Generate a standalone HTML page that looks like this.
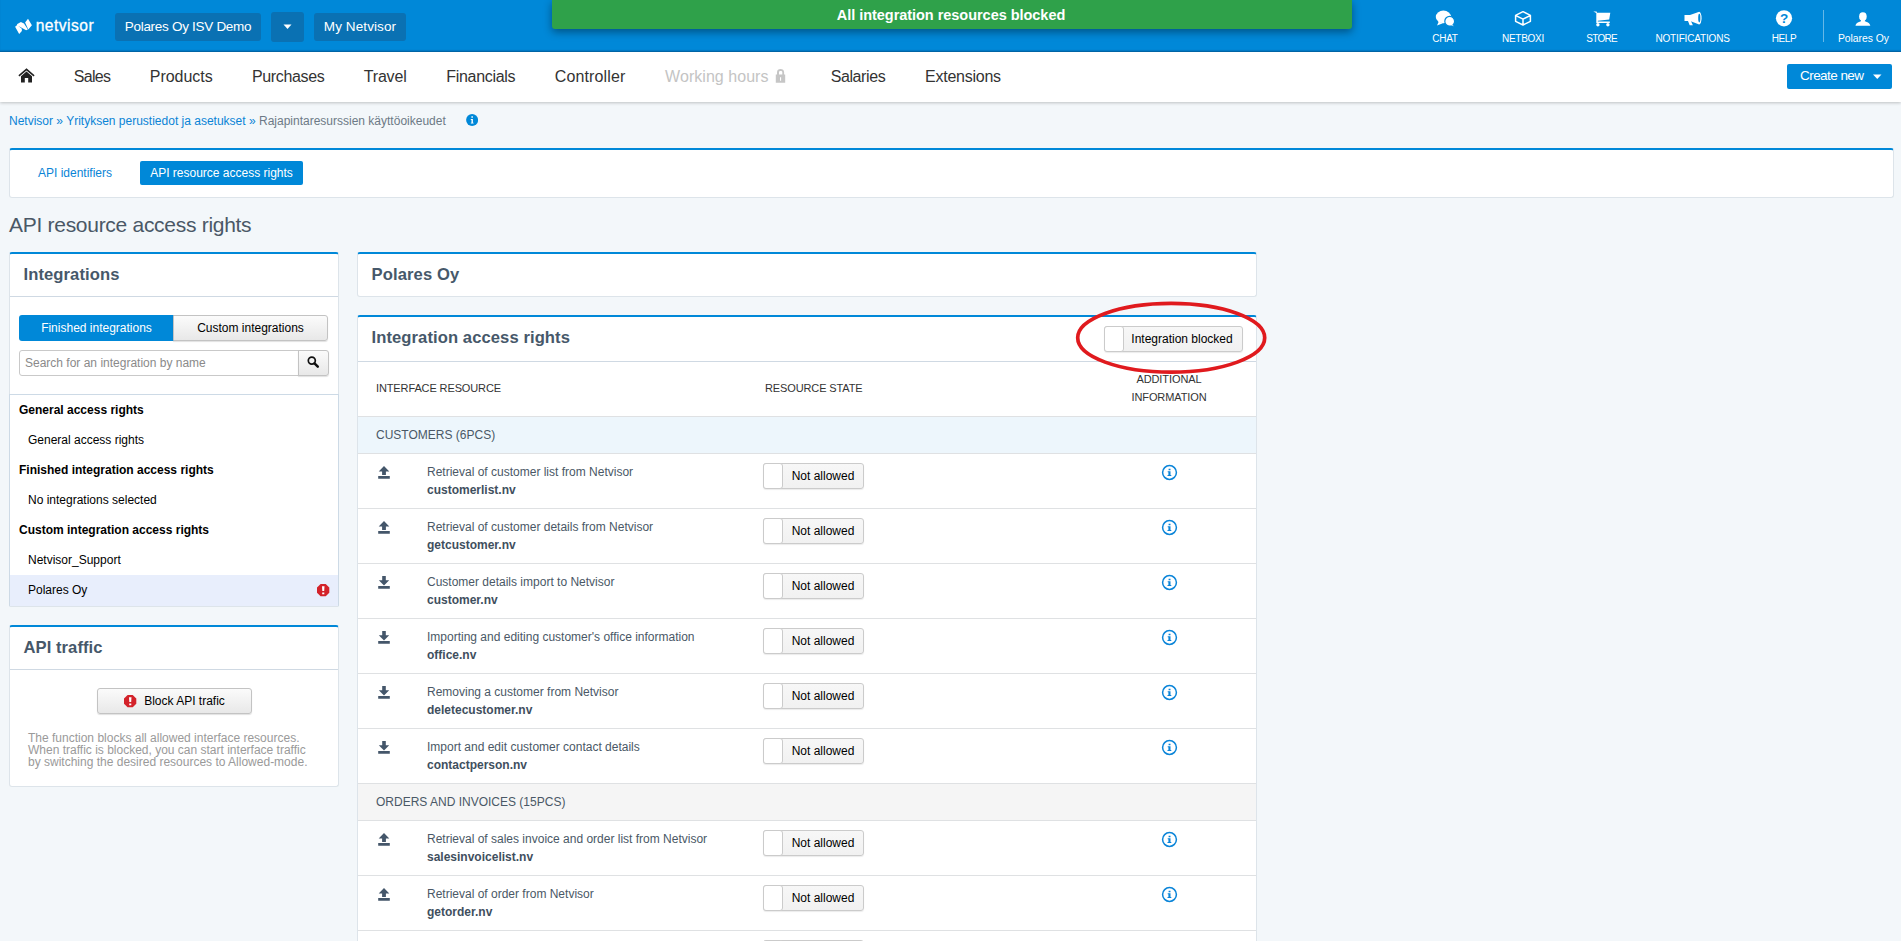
<!DOCTYPE html>
<html lang="en">
<head>
<meta charset="utf-8">
<title>Netvisor - API resource access rights</title>
<style>
*{box-sizing:border-box;margin:0;padding:0}
html,body{width:1901px;height:941px;overflow:hidden}
body{background:#f3f7fa;font-family:"Liberation Sans",Arial,sans-serif;font-size:12px;color:#333;position:relative}
.abs{position:absolute}
i{font-style:normal}
/* top bar */
#top{position:absolute;left:0;top:0;width:1901px;height:52px;background:#0088d8;box-shadow:inset 0 -2px 2px -1px rgba(0,50,100,.5)}
.tbtn{position:absolute;background:#0a71b3;border-radius:3px;color:#fff;font-size:13.5px;text-align:center;white-space:nowrap}
.ticon{position:absolute;top:0;height:51px;color:#fff;text-align:center;font-size:9.7px;white-space:nowrap;width:100px;margin-left:-50px}
.ticon span{position:absolute;left:0;right:0;top:31.5px;line-height:13px}
.ticon svg{position:absolute;top:9.5px;left:50%;margin-left:-10px}
#toast{position:absolute;left:552px;top:0;width:800px;height:29px;background:#2fa14a;border-radius:0 0 3px 3px;box-shadow:0 3px 9px rgba(0,0,0,.4);color:#fff;font-weight:bold;font-size:14.5px;line-height:31px;text-align:center;padding-right:2px}
/* nav */
#nav{position:absolute;left:0;top:52px;width:1901px;height:50px;background:#fff;box-shadow:0 1px 3px rgba(0,0,0,.22)}
#nav a{position:absolute;top:0;line-height:50px;font-size:15.4px;color:#333;white-space:nowrap;text-decoration:none}
#nav a.dis{color:#c4c4c4}
#create{position:absolute;left:1787px;top:12px;width:105px;height:25px;background:#0088d8;border-radius:2px;color:#fff;font-size:13.5px;line-height:24px;padding-left:13px}
/* content */
a.l{color:#0a84d6;text-decoration:none}
.panel{position:absolute;background:#fff;border:1px solid #dde4ea;border-top:2px solid #0088d8;border-radius:3px}
.ph{position:absolute;left:0;right:0;top:0;height:43px;border-bottom:1px solid #cfd9e3;font-weight:bold;font-size:17px;color:#46586a;line-height:42px;padding-left:13.500px;white-space:nowrap}
.btn{position:absolute;border:1px solid #c3c3c3;border-radius:3px;background:linear-gradient(#fbfbfb,#e8e8e8);color:#000;font-size:12px;text-align:center;white-space:nowrap;box-shadow:0 1px 1px rgba(0,0,0,.12)}
.li{position:absolute;left:0;width:328px;height:30px;line-height:30px;color:#000;white-space:nowrap}
.li.b{font-weight:bold;padding-left:9px}
.li.s{padding-left:18px}
.row{position:absolute;left:0;width:898px;height:55px;border-top:1px solid #dfe1e3;color:#4a5866}
.row .io{position:absolute;left:19.500px;top:12px}
.row .t1{position:absolute;left:69px;top:10px;line-height:16px;white-space:nowrap}
.row .t2{position:absolute;left:69px;top:28px;line-height:16px;font-weight:bold;white-space:nowrap;color:#3f4f5e}
.row .inf{position:absolute;left:802.800px;top:9.900px}
.sec{position:absolute;left:0;width:898px;height:37px;border-top:1px solid #dfe1e3;line-height:36px;padding-left:18px;color:#4a5866;white-space:nowrap}
.tg{position:absolute;height:26px;border:1px solid #cbcbcb;border-radius:3px;background:linear-gradient(#f7f7f7,#f1f1f1);color:#000;box-shadow:0 1px 1px rgba(0,0,0,.08)}
.tg i{position:absolute;left:-1px;top:-1px;bottom:-1px;background:#fff;border:1px solid #cbcbcb;border-radius:3px}
.tg span{position:absolute;right:1px;top:0;line-height:24px;text-align:center;white-space:nowrap}
.th{position:absolute;font-size:11px;color:#333;white-space:nowrap;line-height:18px}
</style>
</head>
<body>
<div id="top">
  <svg class="abs" style="left:14px;top:18px" width="19" height="17" viewBox="0 0 19 17"><path d="M1.100 8.800L3.200 7L7.800 10.700L7.900 13L5.150 16.100z M2.900 6.300L6.900 4L10 5.400L13.900 11.500L12.100 12.200L3.600 7.400z M14 .7L17.900 7.300L14.300 11.600L11.100 4.400z" fill="#fff"/></svg>
  <div class="abs" id="logo" style="left:35.700px;top:13.500px;color:#fff;font-size:15.6px;letter-spacing:0.486px;-webkit-text-stroke:.3px #fff;line-height:24px;white-space:nowrap">netvisor</div>
  <div class="tbtn" style="left:115px;top:13px;width:146px;height:28px;line-height:27px;font-size:13.5px;letter-spacing:-0.292px">Polares Oy ISV Demo</div>
  <div class="tbtn" style="left:271px;top:12px;width:33px;height:30px"><svg width="33" height="30"><path d="M12.5 12.5h8l-4 4.5z" fill="#fff"/></svg></div>
  <div class="tbtn" style="left:314px;top:13px;width:92px;height:28px;line-height:27px;font-size:13.5px;letter-spacing:0.094px">My Netvisor</div>
  <div id="toast" style="font-size:14.5px;letter-spacing:-0.035px">All integration resources blocked</div>
  <div class="ticon" style="left:1445px"><svg width="20" height="18" viewBox="0 0 20 18"><path d="M3.800 11.500L2 15.500L7.900 13.200z" fill="#fff"/><ellipse cx="8.400" cy="6.900" rx="7.600" ry="6.300" fill="#fff"/><path d="M16.500 13.500L19.200 16.200L14 15.600z" fill="#fff" stroke="#0088d8" stroke-width=".8"/><circle cx="14.700" cy="11.200" r="4.900" fill="#fff" stroke="#0088d8" stroke-width="1.200"/><path d="M16.200 13.500L18.600 15.800L14.500 15z" fill="#fff"/></svg><span style="font-size:10px;letter-spacing:-0.296px">CHAT</span></div>
  <div class="ticon" style="left:1523px"><svg width="20" height="18" viewBox="0 0 20 18"><path d="M10 1.700L17.400 5.400V11.300L10 15L2.600 11.300V5.400z M2.900 5.600L10 9.200L17.100 5.600 M10 9.200V14.800" fill="none" stroke="#fff" stroke-width="1.500" stroke-linejoin="round"/></svg><span style="font-size:10px;letter-spacing:-0.272px">NETBOXI</span></div>
  <div class="ticon" style="left:1601.600px"><svg width="20" height="18" viewBox="0 0 20 18"><path d="M1.300 1.500H4.600L5 2.700H18.300L17.200 9.600L5.800 10.800V11.400H17.800V12.900H4.300V3z" fill="#fff"/><circle cx="5.900" cy="14.800" r="1.700" fill="#fff"/><circle cx="15.900" cy="14.800" r="1.700" fill="#fff"/></svg><span style="font-size:10px;letter-spacing:-0.696px">STORE</span></div>
  <div class="ticon" style="left:1692.600px"><svg width="20" height="18" viewBox="0 0 20 18"><path d="M1.500 5H7L15.600 2.100V14.300L7 11H1.500z" fill="#fff"/><path d="M4.800 10.500H7.700L9.900 15.300H6.700z" fill="#fff"/><ellipse cx="16.100" cy="8.100" rx="2.500" ry="6.300" fill="#fff"/><ellipse cx="16.300" cy="8.100" rx="1.100" ry="4.300" fill="#0088d8"/></svg><span style="font-size:10px;letter-spacing:-0.168px">NOTIFICATIONS</span></div>
  <div class="ticon" style="left:1784px"><svg width="20" height="18" viewBox="0 0 20 18"><circle cx="10" cy="8.300" r="8.100" fill="#fff"/><text x="10" y="13" font-family="Liberation Sans, sans-serif" font-weight="bold" font-size="13.500" fill="#0088d8" text-anchor="middle">?</text></svg><span style="font-size:10px;letter-spacing:-0.431px">HELP</span></div>
  <div class="abs" style="left:1823px;top:10px;width:1px;height:32px;background:rgba(255,255,255,.4)"></div>
  <div class="ticon" style="left:1863.400px"><svg width="20" height="18" viewBox="0 0 20 18"><ellipse cx="9.900" cy="6.600" rx="3.800" ry="4.400" fill="#fff"/><path d="M2.500 15.700C3 12.800 5.500 12.300 8 11.300V9.500H11.800V11.300C14.300 12.300 16.800 12.800 17.300 15.700z" fill="#fff"/></svg><span style="font-size:10.4px;letter-spacing:-0.041px">Polares Oy</span></div>
</div>
<div id="nav">
  <svg class="abs" style="left:18px;top:16px" width="17" height="15" viewBox="0 0 17 15"><path d="M8.500 0.300L16.600 7.300L15.600 8.400L8.500 2.400L1.400 8.400L0.400 7.300z" fill="#222"/><path d="M8.500 3.600L14 8.300V14.500H10.200V10H6.800V14.500H3V8.300z" fill="#222"/></svg>
  <a class="" style="left:73.7px;font-size:16px;letter-spacing:-0.666px">Sales</a>
  <a class="" style="left:149.8px;font-size:16px;letter-spacing:-0.043px">Products</a>
  <a class="" style="left:252.0px;font-size:16px;letter-spacing:-0.355px">Purchases</a>
  <a class="" style="left:363.8px;font-size:16px;letter-spacing:-0.193px">Travel</a>
  <a class="" style="left:446.3px;font-size:16px;letter-spacing:-0.303px">Financials</a>
  <a class="" style="left:554.7px;font-size:16px;letter-spacing:0.134px">Controller</a>
  <a class="dis" style="left:665.1px;font-size:16px;letter-spacing:0.042px">Working hours</a>
  <a class="" style="left:830.7px;font-size:16px;letter-spacing:-0.402px">Salaries</a>
  <a class="" style="left:925.0px;font-size:16px;letter-spacing:-0.247px">Extensions</a>
  <svg class="abs" style="left:775px;top:17px" width="11" height="14" viewBox="0 0 11 14"><path d="M.8 5.600H2V3.200C2 1.200 3.500 0 5.550 0S9.100 1.200 9.100 3.200V5.600H10.200V13.800H.8z M4 5.600H7.300V3.300C7.300 2.400 6.600 1.900 5.650 1.900S4 2.400 4 3.300z M5 8.300H6.100V11.700H5z" fill="#c6c6c6" fill-rule="evenodd"/></svg>
  <div id="create" style="font-size:13.5px;letter-spacing:-0.555px">Create new<svg class="abs" style="left:86px;top:10px" width="9" height="6"><path d="M0 .5h8.500L4.250 5z" fill="#fff"/></svg></div>
</div>
<div class="abs" id="crumb" style="left:9px;top:114px;line-height:14px;font-size:12px;color:#6d7a86;white-space:nowrap"><a class="l">Netvisor</a> <a class="l">»</a> <a class="l">Yrityksen perustiedot ja asetukset</a> <a class="l">»</a> Rajapintaresurssien käyttöoikeudet</div>
<svg class="abs" style="left:466px;top:114px" width="12" height="12" viewBox="0 0 12 12"><circle cx="6.100" cy="6" r="6" fill="#0088d8"/><path d="M5.400 2.300h1.500v1.500H5.400z M4.800 5H6.900V8.700h.7v.9H4.800v-.9h.7V5.900h-.7z" fill="#fff"/></svg>

<div class="panel" id="tabs" style="left:9px;top:148px;width:1885px;height:50px">
  <a class="l abs" style="left:28px;top:16px;line-height:14px">API identifiers</a>
  <div class="abs" style="left:130px;top:11px;width:163px;height:24px;background:#0088d8;border-radius:2px;color:#fff;line-height:24px;text-align:center">API resource access rights</div>
</div>

<div class="abs" id="title" style="left:9px;top:212px;font-size:21px;letter-spacing:-0.287px;line-height:26px;color:#4a5866;white-space:nowrap">API resource access rights</div>
<div class="panel" id="lp" style="left:9px;top:252px;width:330px;height:355px">
<div class="ph" style="font-size:16.6px;letter-spacing:0.086px">Integrations</div>
<div class="abs" style="left:9px;top:61px;width:155px;height:26px;background:#0088d8;border-radius:3px 0 0 3px;color:#fff;line-height:26px;text-align:center">Finished integrations</div>
<div class="btn" style="left:163px;top:61px;width:155px;height:26px;line-height:24px;border-radius:0 3px 3px 0">Custom integrations</div>
<div class="abs" style="left:9px;top:96px;width:281px;height:26px;border:1px solid #c9c9c9;border-radius:3px 0 0 3px;background:#fff;color:#8a8a8a;line-height:24px;padding-left:5px;white-space:nowrap">Search for an integration by name</div>
<div class="btn" style="left:288px;top:96px;width:31px;height:26px;border-radius:0 3px 3px 0"><svg width="29" height="24" viewBox="0 0 29 24"><circle cx="12.800" cy="9.600" r="3.500" fill="none" stroke="#111" stroke-width="1.700"/><path d="M15.500 12.300L18.800 15.600" stroke="#111" stroke-width="2.500" stroke-linecap="round"/></svg></div>
<div class="abs" style="left:-1px;right:-1px;top:140px;bottom:-1px;border:1px solid #cddae6;border-bottom-color:#dde4ea;border-radius:0 0 2px 2px"></div>
<div class="li b" style="top:141px">General access rights</div>
<div class="li s" style="top:171px">General access rights</div>
<div class="li b" style="top:201px">Finished integration access rights</div>
<div class="li s" style="top:231px">No integrations selected</div>
<div class="li b" style="top:261px">Custom integration access rights</div>
<div class="li s" style="top:291px">Netvisor_Support</div>
<div class="li s" style="top:321px;background:#e8eefc;height:31px">Polares Oy</div>
<svg class="abs" style="left:306.600px;top:329.800px" width="13" height="13" viewBox="0 0 13 13"><path d="M3.600 0H8.700L12.300 3.600V8.700L8.700 12.300H3.600L0 8.700V3.600z" fill="#d3222a"/><path d="M5 2.200H7.500L7.200 7.100H5.300z M5.200 8.400H7.300V10.300H5.200z" fill="#fff"/></svg>
</div>
<div class="panel" id="tp" style="left:9px;top:625px;width:330px;height:162px">
  <div class="ph" style="font-size:16.6px;letter-spacing:0.057px">API traffic</div>
  <div class="btn" style="left:87px;top:61px;width:155px;height:26px;line-height:24px"><svg style="vertical-align:-2.500px;margin-right:7px" width="13" height="13" viewBox="0 0 13 13"><path d="M3.600 0H8.700L12.300 3.600V8.700L8.700 12.300H3.600L0 8.700V3.600z" fill="#d3222a"/><path d="M5 2.200H7.500L7.200 7.100H5.300z M5.200 8.400H7.300V10.300H5.200z" fill="#fff"/></svg>Block API trafic</div>
  <div class="abs" style="left:18px;top:105px;color:#9a9a9a;line-height:12px;white-space:nowrap">The function blocks all allowed interface resources.<br>When traffic is blocked, you can start interface traffic<br>by switching the desired resources to Allowed-mode.</div>
</div>
<div class="panel" id="rp1" style="left:357px;top:252px;width:900px;height:45px">
  <div class="ph" style="border-bottom:0;font-size:16.6px;letter-spacing:0.108px">Polares Oy</div>
</div>
<div class="panel" id="rp2" style="left:357px;top:315px;width:900px;height:640px;border-bottom:0;border-radius:3px 3px 0 0">
<div class="ph" style="height:45px;font-size:16.6px;letter-spacing:0.083px">Integration access rights</div>
<div class="tg" style="left:746px;top:9px;width:139px"><i style="width:20px"></i><span style="left:20px;right:3px">Integration blocked</span></div>
<div class="th" style="left:18px;top:62px;font-size:11px;letter-spacing:-0.119px">INTERFACE RESOURCE</div>
<div class="th" style="left:407px;top:62px;font-size:11px;letter-spacing:-0.116px">RESOURCE STATE</div>
<div class="th" style="left:711px;top:53px;width:200px;text-align:center"><span style="font-size:11px;letter-spacing:-0.082px">ADDITIONAL</span><br><span style="font-size:11px;letter-spacing:-0.108px">INFORMATION</span></div>
<div class="sec" style="top:99px;background:#edf6fc">CUSTOMERS (6PCS)</div>
<div class="row" style="top:136px"><svg class="io" width="12" height="13" viewBox="0 0 12 13"><path d="M6 0L11.300 5.500H7.900V8.900H4.100V5.500H.700z M.2 10.100h11.600v2.700H.2z" fill="#44566a"/></svg><div class="t1">Retrieval of customer list from Netvisor</div><div class="t2">customerlist.nv</div><div class="tg" style="left:405px;top:9px;width:101px"><i style="width:20px"></i><span style="left:20px;right:1px">Not allowed</span></div><svg class="inf" width="17" height="17" viewBox="0 0 17 17"><circle cx="8.500" cy="8.500" r="6.900" fill="#fff" stroke="#0a84d8" stroke-width="1.500"/><path d="M7.600 4.700h1.900v1.500H7.600z M6.700 7.300H9.500V11.100h.8v.9H6.500v-.9h.9V8.200h-.7z" fill="#0a84d8"/></svg></div>
<div class="row" style="top:191px"><svg class="io" width="12" height="13" viewBox="0 0 12 13"><path d="M6 0L11.300 5.500H7.900V8.900H4.100V5.500H.700z M.2 10.100h11.600v2.700H.2z" fill="#44566a"/></svg><div class="t1">Retrieval of customer details from Netvisor</div><div class="t2">getcustomer.nv</div><div class="tg" style="left:405px;top:9px;width:101px"><i style="width:20px"></i><span style="left:20px;right:1px">Not allowed</span></div><svg class="inf" width="17" height="17" viewBox="0 0 17 17"><circle cx="8.500" cy="8.500" r="6.900" fill="#fff" stroke="#0a84d8" stroke-width="1.500"/><path d="M7.600 4.700h1.900v1.500H7.600z M6.700 7.300H9.500V11.100h.8v.9H6.500v-.9h.9V8.200h-.7z" fill="#0a84d8"/></svg></div>
<div class="row" style="top:246px"><svg class="io" width="12" height="13" viewBox="0 0 12 13"><path d="M4.200 0H7.800V4.200H11.200L6 9.400L.800 4.200H4.200z M.2 10.100h11.600v2.700H.2z" fill="#44566a"/></svg><div class="t1">Customer details import to Netvisor</div><div class="t2">customer.nv</div><div class="tg" style="left:405px;top:9px;width:101px"><i style="width:20px"></i><span style="left:20px;right:1px">Not allowed</span></div><svg class="inf" width="17" height="17" viewBox="0 0 17 17"><circle cx="8.500" cy="8.500" r="6.900" fill="#fff" stroke="#0a84d8" stroke-width="1.500"/><path d="M7.600 4.700h1.900v1.500H7.600z M6.700 7.300H9.500V11.100h.8v.9H6.500v-.9h.9V8.200h-.7z" fill="#0a84d8"/></svg></div>
<div class="row" style="top:301px"><svg class="io" width="12" height="13" viewBox="0 0 12 13"><path d="M4.200 0H7.800V4.200H11.200L6 9.400L.800 4.200H4.200z M.2 10.100h11.600v2.700H.2z" fill="#44566a"/></svg><div class="t1">Importing and editing customer's office information</div><div class="t2">office.nv</div><div class="tg" style="left:405px;top:9px;width:101px"><i style="width:20px"></i><span style="left:20px;right:1px">Not allowed</span></div><svg class="inf" width="17" height="17" viewBox="0 0 17 17"><circle cx="8.500" cy="8.500" r="6.900" fill="#fff" stroke="#0a84d8" stroke-width="1.500"/><path d="M7.600 4.700h1.900v1.500H7.600z M6.700 7.300H9.500V11.100h.8v.9H6.500v-.9h.9V8.200h-.7z" fill="#0a84d8"/></svg></div>
<div class="row" style="top:356px"><svg class="io" width="12" height="13" viewBox="0 0 12 13"><path d="M4.200 0H7.800V4.200H11.200L6 9.400L.800 4.200H4.200z M.2 10.100h11.600v2.700H.2z" fill="#44566a"/></svg><div class="t1">Removing a customer from Netvisor</div><div class="t2">deletecustomer.nv</div><div class="tg" style="left:405px;top:9px;width:101px"><i style="width:20px"></i><span style="left:20px;right:1px">Not allowed</span></div><svg class="inf" width="17" height="17" viewBox="0 0 17 17"><circle cx="8.500" cy="8.500" r="6.900" fill="#fff" stroke="#0a84d8" stroke-width="1.500"/><path d="M7.600 4.700h1.900v1.500H7.600z M6.700 7.300H9.500V11.100h.8v.9H6.500v-.9h.9V8.200h-.7z" fill="#0a84d8"/></svg></div>
<div class="row" style="top:411px"><svg class="io" width="12" height="13" viewBox="0 0 12 13"><path d="M4.200 0H7.800V4.200H11.200L6 9.400L.800 4.200H4.200z M.2 10.100h11.600v2.700H.2z" fill="#44566a"/></svg><div class="t1">Import and edit customer contact details</div><div class="t2">contactperson.nv</div><div class="tg" style="left:405px;top:9px;width:101px"><i style="width:20px"></i><span style="left:20px;right:1px">Not allowed</span></div><svg class="inf" width="17" height="17" viewBox="0 0 17 17"><circle cx="8.500" cy="8.500" r="6.900" fill="#fff" stroke="#0a84d8" stroke-width="1.500"/><path d="M7.600 4.700h1.900v1.500H7.600z M6.700 7.300H9.500V11.100h.8v.9H6.500v-.9h.9V8.200h-.7z" fill="#0a84d8"/></svg></div>
<div class="sec" style="top:466px;background:#f5f5f5">ORDERS AND INVOICES (15PCS)</div>
<div class="row" style="top:503px"><svg class="io" width="12" height="13" viewBox="0 0 12 13"><path d="M6 0L11.300 5.500H7.900V8.900H4.100V5.500H.700z M.2 10.100h11.600v2.700H.2z" fill="#44566a"/></svg><div class="t1">Retrieval of sales invoice and order list from Netvisor</div><div class="t2">salesinvoicelist.nv</div><div class="tg" style="left:405px;top:9px;width:101px"><i style="width:20px"></i><span style="left:20px;right:1px">Not allowed</span></div><svg class="inf" width="17" height="17" viewBox="0 0 17 17"><circle cx="8.500" cy="8.500" r="6.900" fill="#fff" stroke="#0a84d8" stroke-width="1.500"/><path d="M7.600 4.700h1.900v1.500H7.600z M6.700 7.300H9.500V11.100h.8v.9H6.500v-.9h.9V8.200h-.7z" fill="#0a84d8"/></svg></div>
<div class="row" style="top:558px"><svg class="io" width="12" height="13" viewBox="0 0 12 13"><path d="M6 0L11.300 5.500H7.900V8.900H4.100V5.500H.700z M.2 10.100h11.600v2.700H.2z" fill="#44566a"/></svg><div class="t1">Retrieval of order from Netvisor</div><div class="t2">getorder.nv</div><div class="tg" style="left:405px;top:9px;width:101px"><i style="width:20px"></i><span style="left:20px;right:1px">Not allowed</span></div><svg class="inf" width="17" height="17" viewBox="0 0 17 17"><circle cx="8.500" cy="8.500" r="6.900" fill="#fff" stroke="#0a84d8" stroke-width="1.500"/><path d="M7.600 4.700h1.900v1.500H7.600z M6.700 7.300H9.500V11.100h.8v.9H6.500v-.9h.9V8.200h-.7z" fill="#0a84d8"/></svg></div>
<div class="row" style="top:613px"><svg class="io" width="12" height="13" viewBox="0 0 12 13"><path d="M6 0L11.300 5.500H7.900V8.900H4.100V5.500H.700z M.2 10.100h11.600v2.700H.2z" fill="#44566a"/></svg><div class="t1">Retrieval of sales invoice from Netvisor</div><div class="t2">getsalesinvoice.nv</div><div class="tg" style="left:405px;top:9px;width:101px"><i style="width:20px"></i><span style="left:20px;right:1px">Not allowed</span></div><svg class="inf" width="17" height="17" viewBox="0 0 17 17"><circle cx="8.500" cy="8.500" r="6.900" fill="#fff" stroke="#0a84d8" stroke-width="1.500"/><path d="M7.600 4.700h1.900v1.500H7.600z M6.700 7.300H9.500V11.100h.8v.9H6.500v-.9h.9V8.200h-.7z" fill="#0a84d8"/></svg></div>
</div>
<svg class="abs" style="left:1070px;top:296px" width="204" height="82" viewBox="0 0 204 82"><ellipse cx="101.200" cy="41.800" rx="93.500" ry="34.400" fill="none" stroke="#e01a1e" stroke-width="3.700"/></svg>
</body>
</html>
